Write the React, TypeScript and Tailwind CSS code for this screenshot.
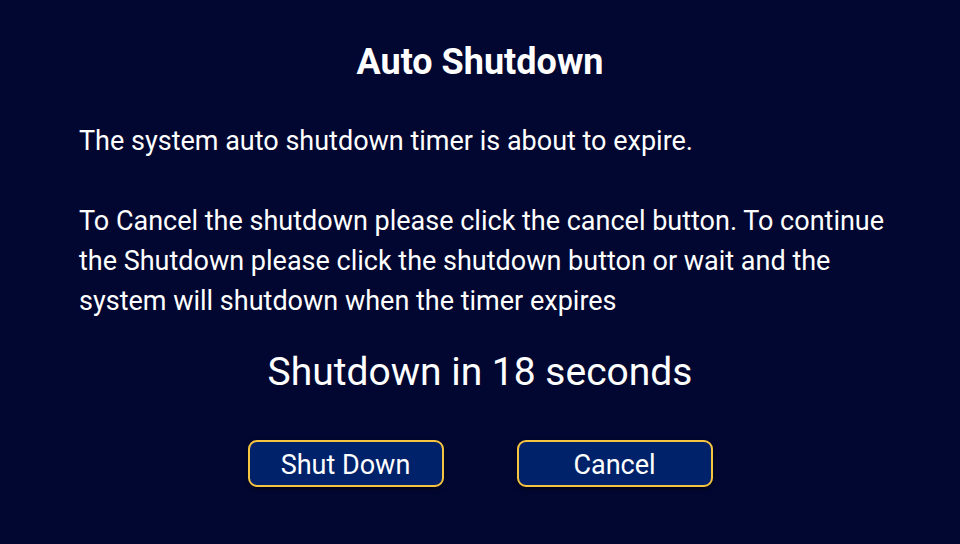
export default function App() {
  return (
    <div
      className="w-[960px] h-[544px] bg-[#020731] text-white flex flex-col"
      style={{ fontFamily: 'Roboto, "Noto Sans", sans-serif' }}
    >
      <h1 className="text-[36px] font-bold text-center leading-[40px] mt-[42px]">Auto Shutdown</h1>
      <div className="pl-[79px] pr-[60px] mt-[39px] text-[27px] leading-[40px]">
        <p>The system auto shutdown timer is about to expire.</p>
        <p className="mt-[40px]">
          To Cancel the shutdown please click the cancel button. To continue the Shutdown please click the shutdown
          button or wait and the system will shutdown when the timer expires
        </p>
      </div>
      <div className="text-center text-[39px] leading-[48px] mt-[27px]">Shutdown in 18 seconds</div>
      <div className="flex justify-center gap-[73px] mt-[44px]">
        <button className="w-[196px] h-[47px] pt-[3px] bg-[#00226a] border-2 border-[#f5c542] rounded-[9px] text-[27px] leading-[40px] text-white shadow-[0_2px_4px_rgba(0,0,0,0.5)]">
          Shut Down
        </button>
        <button className="w-[196px] h-[47px] pt-[3px] bg-[#00226a] border-2 border-[#f5c542] rounded-[9px] text-[27px] leading-[40px] text-white shadow-[0_2px_4px_rgba(0,0,0,0.5)]">
          Cancel
        </button>
      </div>
    </div>
  );
}
